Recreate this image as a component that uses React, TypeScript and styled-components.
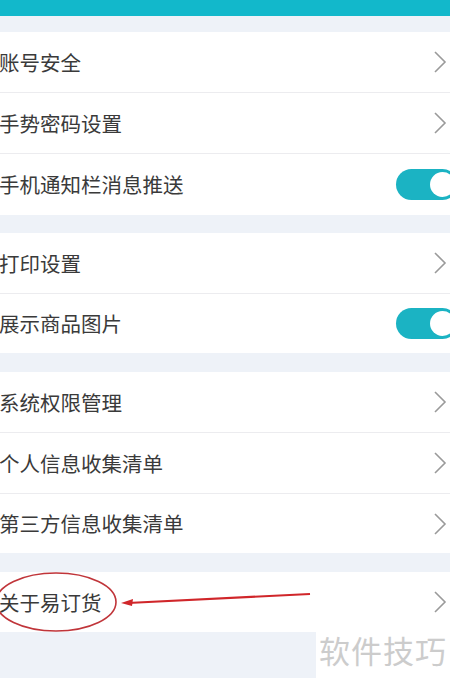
import React from "react";
import styled, { createGlobalStyle } from "styled-components";

const Global = createGlobalStyle`
  *, *::before, *::after { box-sizing: border-box; }
  html, body { margin: 0; padding: 0; background: #eef2f8; }
  body { font-family: "Noto Sans CJK SC", "Noto Sans", sans-serif; }
  #root { width: 450px; height: 678px; overflow: hidden; }
`;

const Page = styled.div`
  position: relative;
  width: 450px;
  height: 678px;
  background: #eef2f8;
  display: flex;
  flex-direction: column;
`;

const TopBar = styled.div`
  height: 16px;
  background: #12b8cb;
  flex-shrink: 0;
`;

const Group = styled.div<{ $gap: number }>`
  margin-top: ${(p) => p.$gap}px;
  background: #ffffff;
  display: flex;
  flex-direction: column;
  flex-shrink: 0;
`;

const Row = styled.div<{ $h: number }>`
  position: relative;
  height: ${(p) => p.$h}px;
  display: flex;
  align-items: center;
  justify-content: space-between;
  border-bottom: 1px solid #ececef;
  &:last-child { border-bottom: none; }
`;

const Label = styled.span`
  font-size: 20.5px;
  color: #3a3a3a;
  margin-left: -1px;
  line-height: 1;
`;

const ChevronBox = styled.span`
  display: flex;
  margin-right: 3px;
`;

const Chevron = () => (
  <ChevronBox>
    <svg width="14" height="24" viewBox="0 0 14 24">
      <path d="M2 2 L12 12 L2 22" fill="none" stroke="#9a9a9a" strokeWidth="1.6" />
    </svg>
  </ChevronBox>
);

const Toggle = styled.span`
  position: relative;
  width: 62px;
  height: 31px;
  margin-right: -8px;
  border-radius: 16px;
  background: #1bb3c3;
  &::after {
    content: "";
    position: absolute;
    right: 3px;
    top: 3px;
    width: 25px;
    height: 25px;
    border-radius: 50%;
    background: #fff;
  }
`;

const Annotation = styled.svg`
  position: absolute;
  left: 0;
  top: 0;
  pointer-events: none;
`;

const Watermark = styled.div`
  position: absolute;
  right: 0;
  bottom: 0;
  width: 134px;
  height: 48px;
  background: #fff;
  display: flex;
  align-items: flex-start;
  justify-content: center;
  font-size: 31px;
  color: #cccccc;
  line-height: 40px;
  letter-spacing: 1px;
`;

type Item = { label: string; kind: "chevron" | "toggle"; h: number };

const groups: { gap: number; items: Item[] }[] = [
  {
    gap: 16,
    items: [
      { label: "账号安全", kind: "chevron", h: 61 },
      { label: "手势密码设置", kind: "chevron", h: 61 },
      { label: "手机通知栏消息推送", kind: "toggle", h: 61 },
    ],
  },
  {
    gap: 18,
    items: [
      { label: "打印设置", kind: "chevron", h: 61 },
      { label: "展示商品图片", kind: "toggle", h: 59 },
    ],
  },
  {
    gap: 19,
    items: [
      { label: "系统权限管理", kind: "chevron", h: 61 },
      { label: "个人信息收集清单", kind: "chevron", h: 61 },
      { label: "第三方信息收集清单", kind: "chevron", h: 59 },
    ],
  },
];

export default function App() {
  return (
    <>
      <Global />
      <Page>
        <TopBar />
        {groups.map((g, gi) => (
          <Group key={gi} $gap={g.gap}>
            {g.items.map((it) => (
              <Row key={it.label} $h={it.h}>
                <Label>{it.label}</Label>
                {it.kind === "chevron" ? <Chevron /> : <Toggle />}
              </Row>
            ))}
          </Group>
        ))}
        <Group $gap={19}>
          <Row $h={60}>
            <Label>关于易订货</Label>
            <Chevron />
            <Annotation width="450" height="60" viewBox="0 0 450 60">
              <ellipse cx="56" cy="30" rx="60" ry="29" fill="none" stroke="#c0353a" strokeWidth="1.6" />
              <path d="M310 22 L128 31" stroke="#d0262a" strokeWidth="2.2" fill="none" />
              <path d="M121 31 L133 27 L132 34 Z" fill="#d0262a" />
            </Annotation>
          </Row>
        </Group>
        <Watermark>软件技巧</Watermark>
      </Page>
    </>
  );
}
